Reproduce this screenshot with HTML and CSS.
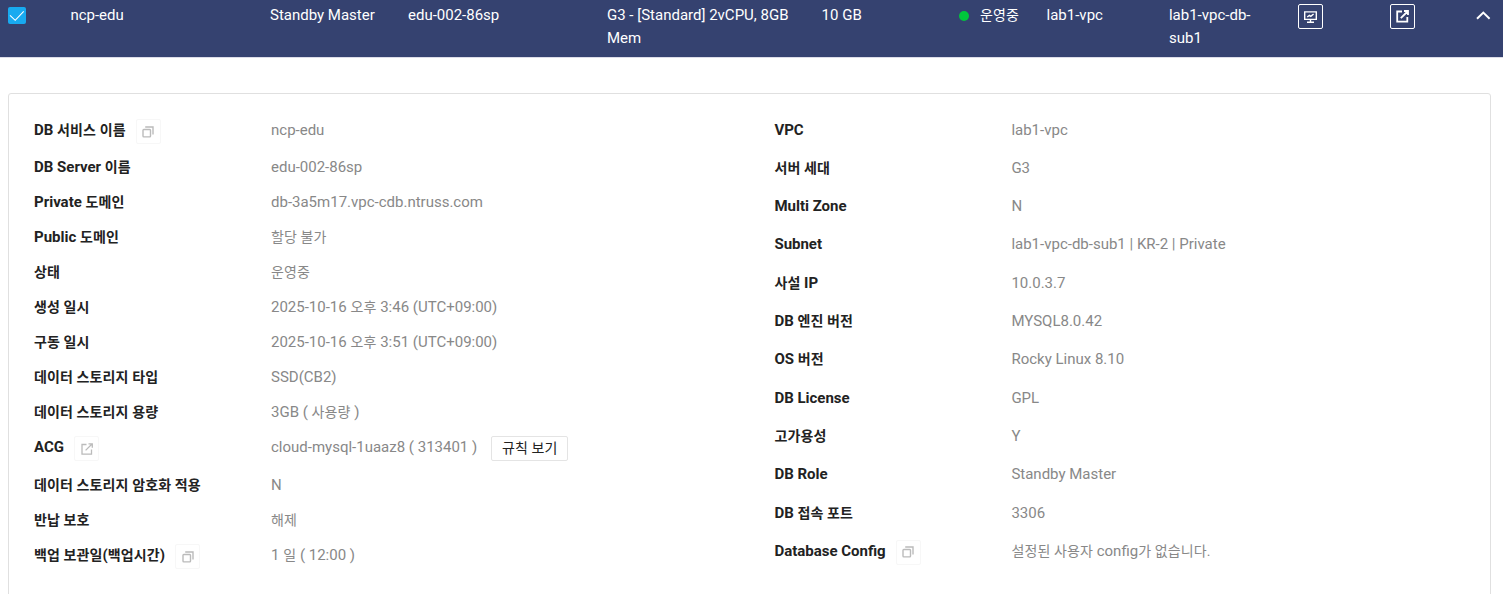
FILE: index.html
```html
<!DOCTYPE html>
<html lang="ko">
<head>
<meta charset="utf-8">
<title>Cloud DB</title>
<link rel="stylesheet" href="styles.css">
</head>
<body>
<svg class="defs" aria-hidden="true">
  <symbol id="copy" viewBox="0 0 12 12"><path d="M3.2 1H11V8.6" fill="none" stroke="currentColor" stroke-width="1.4"/><rect x="1" y="3.5" width="7.5" height="7.4" rx=".8" fill="none" stroke="currentColor" stroke-width="1.4"/></symbol>
  <symbol id="open" viewBox="0 0 12 12"><path d="M5.5 1.5H1V11.2H10.5V6.5M7.5 .8H11.3V4.7M11 1L4.6 7.4" fill="none" stroke="currentColor" stroke-width="1.3"/></symbol>
</svg>
<div class="row">
  <div><span class="check"><svg width="18" height="17" viewBox="0 0 18 17"><path d="M2 8.3L7.2 13.3L15.7 4.3" fill="none" stroke="#fff" stroke-width="1.1"/></svg></span></div>
  <div>ncp-edu</div>
  <div>Standby Master</div>
  <div>edu-002-86sp</div>
  <div class="spec">G3 - [Standard] 2vCPU, 8GB Mem</div>
  <div>10 GB</div>
  <div class="state"><i class="dot"></i><span class="ko">운영중</span></div>
  <div>lab1-vpc</div>
  <div class="subnet">lab1-vpc-db-sub1</div>
  <div><span class="tool"><svg width="13" height="12" viewBox="0 0 13 12"><path d="M.7 .9H12.3V8.4H.7ZM6.5 8.6V11M3 11.2H10M3.2 6L5.4 4.4L6.8 5.4L9.6 3" fill="none" stroke="#fff" stroke-width="1.4"/></svg></span></div>
  <div><span class="tool"><svg width="13" height="13" viewBox="0 0 13 13"><path d="M6 1.5H1.2V11.7H11.3V7M8 1H12V5M11.5 1.5L4.8 8.2" fill="none" stroke="#fff" stroke-width="1.8"/></svg></span></div>
  <div><svg class="chevron" width="15" height="9" viewBox="0 0 15 9"><path d="M1 7.7L7.3 1.6L13.6 7.7" fill="none" stroke="#fff" stroke-width="2"/></svg></div>
</div>
<div class="panel">
  <dl class="list left">
    <div class="with-copy"><dt>DB <span class="ko">서비스 이름</span><span class="mini"><svg><use href="#copy"/></svg></span></dt><dd>ncp-edu</dd></div>
    <div><dt>DB Server <span class="ko">이름</span></dt><dd>edu-002-86sp</dd></div>
    <div><dt>Private <span class="ko">도메인</span></dt><dd>db-3a5m17.vpc-cdb.ntruss.com</dd></div>
    <div><dt>Public <span class="ko">도메인</span></dt><dd><span class="ko">할당 불가</span></dd></div>
    <div><dt><span class="ko">상태</span></dt><dd><span class="ko">운영중</span></dd></div>
    <div><dt><span class="ko">생성 일시</span></dt><dd>2025-10-16 <span class="ko">오후</span> 3:46 (UTC+09:00)</dd></div>
    <div><dt><span class="ko">구동 일시</span></dt><dd>2025-10-16 <span class="ko">오후</span> 3:51 (UTC+09:00)</dd></div>
    <div><dt><span class="ko">데이터 스토리지 타입</span></dt><dd>SSD(CB2)</dd></div>
    <div><dt><span class="ko">데이터 스토리지 용량</span></dt><dd>3GB ( <span class="ko">사용량</span> )</dd></div>
    <div class="with-button"><dt>ACG<span class="mini"><svg><use href="#open"/></svg></span></dt><dd>cloud-mysql-1uaaz8 ( 313401 )<button class="rules"><span class="ko">규칙 보기</span></button></dd></div>
    <div><dt><span class="ko">데이터 스토리지 암호화 적용</span></dt><dd>N</dd></div>
    <div><dt><span class="ko">반납 보호</span></dt><dd><span class="ko">해제</span></dd></div>
    <div><dt><span class="ko">백업 보관일</span>(<span class="ko">백업시간</span>)<span class="mini"><svg><use href="#copy"/></svg></span></dt><dd>1 <span class="ko">일</span> ( 12:00 )</dd></div>
  </dl>
  <dl class="list right">
    <div><dt>VPC</dt><dd>lab1-vpc</dd></div>
    <div><dt><span class="ko">서버 세대</span></dt><dd>G3</dd></div>
    <div><dt>Multi Zone</dt><dd>N</dd></div>
    <div><dt>Subnet</dt><dd>lab1-vpc-db-sub1 | KR-2 | Private</dd></div>
    <div><dt><span class="ko">사설</span> IP</dt><dd>10.0.3.7</dd></div>
    <div><dt>DB <span class="ko">엔진 버전</span></dt><dd>MYSQL8.0.42</dd></div>
    <div><dt>OS <span class="ko">버전</span></dt><dd>Rocky Linux 8.10</dd></div>
    <div><dt>DB License</dt><dd>GPL</dd></div>
    <div><dt><span class="ko">고가용성</span></dt><dd>Y</dd></div>
    <div><dt>DB Role</dt><dd>Standby Master</dd></div>
    <div><dt>DB <span class="ko">접속 포트</span></dt><dd>3306</dd></div>
    <div><dt>Database Config<span class="mini"><svg><use href="#copy"/></svg></span></dt><dd><span class="ko">설정된 사용자</span> config<span class="ko">가 없습니다.</span></dd></div>
  </dl>
</div>
</body>
</html>
```
FILE: styles.css
```css
* { box-sizing: border-box; }
body {
  margin: 0;
  height: 594px;
  overflow: hidden;
  background: #fff;
  font: 15px/23px Roboto, "Noto Sans CJK KR", sans-serif;
  color: #222;
}
.ko { font-size: 14px; letter-spacing: .12px; }
.defs { display: none; }
.row {
  display: grid;
  grid-template-columns: 62.4px 199.6px 138px 199px 214.6px 137.4px 87.6px 122.4px 129px 92px 86px 1fr;
  height: 58px;
  padding: 4px 0 0 8px;
  background: #354270;
  border-bottom: 1px solid #dcdce8;
  color: #fff;
}
.row svg { display: block; }
.check { display: block; width: 18px; height: 17px; margin-top: 3px; background: #18aaf0; border-radius: 2px; }
.spec { padding-right: 20px; }
.subnet { width: 100px; }
.state { display: flex; }
.dot { width: 10px; height: 10px; margin: 7px 11px 0 0; border-radius: 50%; background: #00c73c; }
.tool {
  display: flex;
  align-items: center;
  justify-content: center;
  width: 25px;
  height: 25px;
  border: 1px solid #fff;
  border-radius: 2px;
}
.chevron { margin-top: 7px; }
.panel {
  display: grid;
  grid-template-columns: 740.4px 1fr;
  height: 520px;
  margin: 35px 12px 0 8px;
  padding: 25px;
  border: 1px solid #e0e0e0;
  border-radius: 3px;
}
.list { margin: 0; }
.list > div { display: grid; grid-template-columns: 237px 1fr; height: 35px; white-space: nowrap; }
.list > .with-copy { height: 37px; }
.list > .with-button { height: 38px; }
.right { margin-top: -.45px; }
.right > div { height: 38.3px; }
dt { font-weight: 700; }
dd { margin: 0; color: #888; }
.mini {
  display: inline-flex;
  align-items: center;
  justify-content: center;
  width: 25px;
  height: 25px;
  margin-left: 10px;
  vertical-align: top;
  border: 1px solid #f7f7f7;
  border-radius: 2px;
  color: #bbb;
}
.mini svg { width: 12px; height: 12px; }
.rules {
  width: 77px;
  height: 25px;
  margin: 0 0 0 14px;
  padding: 0;
  vertical-align: top;
  border: 1px solid #e4e4e4;
  border-radius: 2px;
  background: #fff;
  color: #222;
  font: 15px/21px Roboto, "Noto Sans CJK KR", sans-serif;
}
```
